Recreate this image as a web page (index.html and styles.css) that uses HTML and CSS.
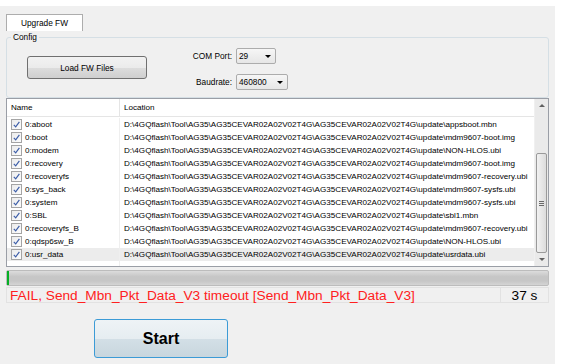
FILE: index.html
```html
<!DOCTYPE html>
<html lang="en">
<head>
  <meta charset="UTF-8" />
  <title>Upgrade FW</title>
  <link rel="stylesheet" href="styles.css">
</head>
<body>
  <div id="window">
    <div class="tabs">
      <div class="tab active">Upgrade FW</div>
    </div>

    <div class="tab-page">
      <fieldset class="group">
        <legend>Config</legend>
        <div class="group-body">
          <button class="btn load-btn">Load FW Files</button>
          <div class="ports">
            <div class="field">
              <span class="field-label">COM Port:</span>
              <div class="combo combo-port"><span>29</span><i class="arrow"></i></div>
            </div>
            <div class="field">
              <span class="field-label">Baudrate:</span>
              <div class="combo combo-baud"><span>460800</span><i class="arrow"></i></div>
            </div>
          </div>
        </div>
      </fieldset>

      <div class="list">
        <div class="table">
          <div class="row head">
            <div class="col-name">Name</div>
            <div class="col-loc">Location</div>
          </div>
          <div id="rows"></div>
        </div>
        <div class="scrollbar">
          <div class="sb-arrow up"></div>
          <div class="sb-track">
            <div class="sb-thumb"><span class="grip"></span></div>
          </div>
          <div class="sb-arrow down"></div>
        </div>
      </div>

      <div class="progress"><div class="progress-fill"></div></div>

      <div class="status">
        <div class="status-msg">FAIL, Send_Mbn_Pkt_Data_V3 timeout [Send_Mbn_Pkt_Data_V3]</div>
        <div class="status-time">37 s</div>
      </div>

      <div class="actions">
        <button class="btn start-btn">Start</button>
      </div>
    </div>
  </div>

  <script>
    const base = "D:\\4GQflash\\Tool\\AG35\\AG35CEVAR02A02V02T4G\\AG35CEVAR02A02V02T4G\\update\\";
    const files = [
      ["0:aboot", "appsboot.mbn"],
      ["0:boot", "mdm9607-boot.img"],
      ["0:modem", "NON-HLOS.ubi"],
      ["0:recovery", "mdm9607-boot.img"],
      ["0:recoveryfs", "mdm9607-recovery.ubi"],
      ["0:sys_back", "mdm9607-sysfs.ubi"],
      ["0:system", "mdm9607-sysfs.ubi"],
      ["0:SBL", "sbl1.mbn"],
      ["0:recoveryfs_B", "mdm9607-recovery.ubi"],
      ["0:qdsp6sw_B", "NON-HLOS.ubi"],
      ["0:usr_data", "usrdata.ubi"],
      ["", ""]
    ];

    const rows = document.getElementById("rows");
    files.forEach((f, i) => {
      const row = document.createElement("div");
      row.className = "row" + (i === 10 ? " hot" : "");
      const name = document.createElement("div");
      name.className = "col-name";
      if (f[0]) {
        const box = document.createElement("span");
        box.className = "check";
        box.innerHTML = '<svg viewBox="0 0 10 10" width="9" height="9"><path d="M2 5.4 L4.1 7.6 L8.2 2" fill="none" stroke="#3d5ea8" stroke-width="1.3"/></svg>';
        name.appendChild(box);
        name.appendChild(document.createTextNode(f[0]));
      }
      const loc = document.createElement("div");
      loc.className = "col-loc";
      loc.textContent = f[0] ? base + f[1] : "";
      row.appendChild(name);
      row.appendChild(loc);
      rows.appendChild(row);
    });
  </script>
</body>
</html>
```

FILE: styles.css
```css
body {
  margin: 0;
  background: #fff;
  font-family: "Liberation Sans", Arial, sans-serif;
  font-size: 8.3px;
  color: #000;
}

#window {
  width: 555px;
  height: 358px;
  margin-top: 6px;
  background: #f0f0f0;
  overflow: hidden;
}

.tabs {
  display: flex;
  padding: 8px 0 0 6px;
}

.tab {
  width: 75px;
  height: 16px;
  line-height: 16px;
  text-align: center;
  background: #fff;
  border: 1px solid #adadad;
  border-bottom: none;
}

.tab-page {
  padding: 0 6px;
}

.group {
  margin: 0;
  padding: 0;
  height: 66px;
  border: 1px solid #d5dfe5;
  border-radius: 3px;
  box-sizing: border-box;
  margin-top: 1px;
}

.group legend {
  padding: 0 2px;
  margin-left: 4px;
  font-size: 8.3px;
}

.group-body {
  display: flex;
  align-items: flex-start;
  padding-left: 20px;
}

.btn {
  font-family: inherit;
  color: #000;
  border: 1px solid #707070;
  border-radius: 3px;
  background: linear-gradient(#f2f2f2 0%, #ebebeb 50%, #dddddd 51%, #cfcfcf 100%);
  cursor: pointer;
  padding: 0;
}

.load-btn {
  width: 120px;
  height: 23px;
  margin-top: 14px;
  font-size: 8.3px;
}

.ports {
  display: flex;
  flex-direction: column;
  gap: 10px;
  margin-left: 37px;
  margin-top: 6px;
}

.field {
  display: flex;
  align-items: center;
}

.field-label {
  width: 48px;
  text-align: right;
  padding-right: 4px;
}

.combo {
  height: 16px;
  box-sizing: border-box;
  border: 1px solid #acacac;
  border-radius: 2px;
  background: linear-gradient(#f6f6f6, #e6e6e6);
  display: flex;
  align-items: center;
  justify-content: space-between;
  padding: 0 4px 0 2px;
}

.combo-port { width: 40px; }
.combo-baud { width: 52px; }

.arrow {
  width: 0;
  height: 0;
  border-left: 3px solid transparent;
  border-right: 3px solid transparent;
  border-top: 3px solid #000;
}

.list {
  display: flex;
  height: 169px;
  box-sizing: border-box;
  border: 1px solid #9a9ea6;
  background: #fff;
  font-size: 8.1px;
}

.table {
  flex: 1;
  overflow: hidden;
}

.row {
  display: flex;
  height: 13px;
  line-height: 13px;
  white-space: nowrap;
}

.row.head {
  height: 17px;
  line-height: 17px;
  border-bottom: 1px solid #e5e5e5;
  margin-bottom: 1px;
}

.row.hot {
  background: #ececec;
}

.col-name {
  width: 113px;
  flex-shrink: 0;
  padding-left: 4px;
  box-sizing: border-box;
  border-right: 1px solid #efefef;
  display: flex;
  align-items: center;
}

.row.head .col-name {
  border-right-color: #e5e5e5;
}

.col-loc {
  padding-left: 4px;
}

.check {
  width: 11px;
  height: 11px;
  box-sizing: border-box;
  border: 1px solid #a4a4a4;
  background: linear-gradient(135deg, #ececec, #fcfcfc);
  display: inline-flex;
  align-items: center;
  justify-content: center;
  margin-right: 3px;
}

.scrollbar {
  width: 13px;
  display: flex;
  flex-direction: column;
  background: #eaeaea;
  border-left: 1px solid #f0f0f0;
}

.sb-arrow {
  height: 13px;
  display: flex;
  align-items: center;
  justify-content: center;
}

.sb-arrow::after {
  content: "";
  border-left: 3px solid transparent;
  border-right: 3px solid transparent;
}

.sb-arrow.up::after { border-bottom: 3px solid #606060; }
.sb-arrow.down::after { border-top: 3px solid #606060; }

.sb-track {
  flex: 1;
  display: flex;
  flex-direction: column;
  justify-content: flex-end;
}

.sb-thumb {
  height: 98px;
  margin: 0 1px;
  border: 1px solid #9a9a9a;
  border-radius: 2px;
  background: linear-gradient(90deg, #f2f2f2, #dcdcdc);
  display: flex;
  align-items: center;
  justify-content: center;
}

.grip {
  width: 5px;
  height: 5px;
  background: repeating-linear-gradient(#6a6a6a 0 1px, transparent 1px 2px);
}

.progress {
  height: 16px;
  margin-top: 3px;
  box-sizing: border-box;
  border: 1px solid #bcbcbc;
  border-radius: 2px;
  background: linear-gradient(#dcdcdc, #c6c6c6 40%, #c6c6c6 70%, #d4d4d4);
}

.progress-fill {
  width: 2px;
  height: 100%;
  background: #06b025;
}

.status {
  display: flex;
  height: 16px;
  margin-top: 1px;
  font-size: 13.7px;
}

.status-msg {
  flex: 1;
  color: #ff2020;
  padding-left: 3px;
  line-height: 16px;
  border: 1px solid #e2e2e2;
  white-space: nowrap;
}

.status-time {
  width: 47px;
  text-align: center;
  line-height: 16px;
  border: 1px solid #e2e2e2;
  border-left: none;
}

.actions {
  display: flex;
  padding: 16px 0 0 88px;
}

.start-btn {
  width: 134px;
  height: 39px;
  font-size: 16px;
  font-weight: bold;
  border: 1px solid #3c9bd6;
  background: linear-gradient(#eef3f6 0%, #e6edf1 50%, #d3dfe6 51%, #c8d6de 100%);
}
```
